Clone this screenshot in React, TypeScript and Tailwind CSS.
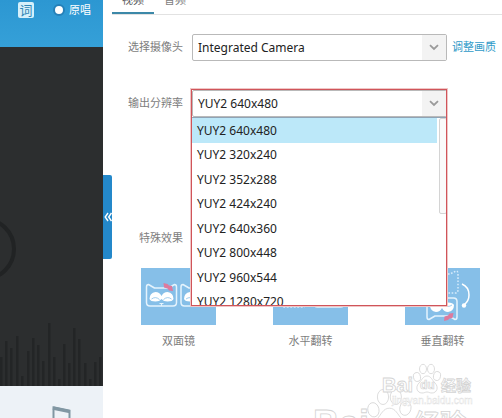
import { useState } from 'react';

const CAMERAS = ['Integrated Camera'];

const RESOLUTIONS = [
  'YUY2 640x480',
  'YUY2 320x240',
  'YUY2 352x288',
  'YUY2 424x240',
  'YUY2 640x360',
  'YUY2 800x448',
  'YUY2 960x544',
  'YUY2 1280x720',
];

// [x, height] of each spectrum bar
const BARS = [
  [0, 29], [5, 45], [10, 38], [16, 50], [21, 10], [27, 35], [32, 48], [37, 41], [42, 25], [48, 63],
  [53, 29], [58, 7], [63, 42], [68, 23], [73, 58], [78, 47], [84, 23], [89, 7], [94, 24], [99, 29],
];

const FIELD =
  'block h-[27px] w-full appearance-none rounded-xs border border-[#b9b9b9] bg-white px-[5px] text-xs text-[#222] outline-none';

function Chevron() {
  return (
    <span className="pointer-events-none absolute inset-y-px right-px flex w-6 items-center justify-center bg-[#f3f3f3]">
      <svg width="10" height="7" viewBox="0 0 10 7" fill="none" stroke="#9a9a9a" strokeWidth="1.8">
        <path d="M1 1.2l4 3.8 4-3.8" />
      </svg>
    </span>
  );
}

function CatFace() {
  return (
    <g>
      <path
        d="M3 2.500l6 3.500h14l6-3.500q2 0 2 2.500v15.500q0 3.500-3.500 3.500h-23Q1 24 1 20.500V5Q1 2.500 3 2.500z"
        fill="none"
        stroke="#e4f3fd"
        strokeWidth="1.500"
        strokeLinejoin="round"
      />
      <path d="M4 17q0-6 6-7 4 0 6 4 2-4 6-4 6 1 6 7-1 2.500-6 2.500-4 0-6-2.500-2 2.500-6 2.500-5 0-6-2.500z" fill="#fff" />
      <path d="M6 17q4-3 8 .5M18 17.500q4-3.500 8-.5" fill="none" stroke="#86bfe8" strokeWidth="0.800" />
      <path d="M14 21.500h4M16 21v3" stroke="#e4f3fd" strokeWidth="1.200" />
      <path d="M18 1l4 1 1.500 1.500 3 .5 1 5-4-.5-1.500-2-3.500-1z" fill="#dd7a9d" />
    </g>
  );
}

function MirrorArt() {
  return (
    <svg className="block h-[57px] w-[75px]" viewBox="0 0 75 57">
      <g transform="translate(4.500 14)"><CatFace /></g>
      <g transform="translate(39 14)"><CatFace /></g>
    </svg>
  );
}

function HorizontalArt() {
  return (
    <svg className="block h-[57px] w-[75px]" viewBox="0 0 75 57">
      <rect x="8" y="16" width="25" height="23" rx="3" fill="none" stroke="#d6ebfb" strokeWidth="1.300" strokeDasharray="2 1.500" />
      <g transform="translate(40 15)"><CatFace /></g>
      <path d="M24 11q13-9 26-1" fill="none" stroke="#fff" strokeWidth="1.500" />
    </svg>
  );
}

function VerticalArt() {
  return (
    <svg className="block h-[57px] w-[75px]" viewBox="0 0 75 57">
      <path d="M24 25V3l7 3h14l6-3q2 0 2 3v16q0 3-3 3z" fill="none" stroke="#d6ebfb" strokeWidth="1.500" strokeDasharray="1.600 1.600" />
      <g transform="translate(21 54) scale(1 -1)"><CatFace /></g>
      <path d="M57 16q7 3 7 11 0 6-5 10" fill="none" stroke="#fff" strokeWidth="1.500" />
      <circle cx="59" cy="37.500" r="2.200" fill="#fff" />
    </svg>
  );
}

function Paw() {
  return (
    <g fill="#fff">
      <ellipse cx="4" cy="13" rx="3.500" ry="4.500" transform="rotate(-12 4 13)" />
      <ellipse cx="10" cy="5" rx="3.500" ry="4.700" />
      <ellipse cx="18" cy="5" rx="3.500" ry="4.700" />
      <ellipse cx="24" cy="12" rx="3.500" ry="4.500" transform="rotate(12 24 12)" />
      <path d="M14 12c4 0 5 4 8 7 4 4 2 10-3 10-3 0-3-1-5-1s-2 1-5 1c-5 0-7-6-3-10 3-3 4-7 8-7z" />
    </g>
  );
}

function Watermark() {
  return (
    <svg
      className="pointer-events-none absolute right-0 bottom-0 h-[58px] w-[192px] font-['Liberation_Sans','Noto_Sans_CJK_SC',sans-serif] font-bold"
      viewBox="0 0 192 58"
      fill="#fff"
      stroke="#d4d4d4"
      strokeWidth="0.800"
    >
      <g transform="translate(57 29) scale(1.600)" strokeWidth="0.500"><Paw /></g>
      <text x="3" y="76" fontSize="36">Bai</text>
      <text x="104" y="73" fontSize="26">经验</text>
      <text x="72" y="32" fontSize="20">Bai</text>
      <g transform="translate(103 4)"><Paw /></g>
      <text x="110" y="29" fontSize="12" strokeWidth="0.700">du</text>
      <text x="131" y="31" fontSize="15">经验</text>
      <text x="82" y="44" fontSize="10" strokeWidth="0.400" stroke="#dedede" fontWeight="400">jingyan.baidu.com</text>
    </svg>
  );
}

const EFFECTS = [
  { label: '双面镜', Art: MirrorArt },
  { label: '水平翻转', Art: HorizontalArt },
  { label: '垂直翻转', Art: VerticalArt },
];

function PlayerPanel() {
  const [original, setOriginal] = useState(true);

  return (
    <aside className="relative flex w-[103px] shrink-0 flex-col">
      <header className="flex h-[47px] items-start bg-linear-to-b from-[#2c97d2] to-[#35a0d8] pt-0.5 pl-[18px] text-[11px] text-white">
        <button type="button" className="h-4 w-4 rounded-xs bg-[#d5f0fb] text-[13px] leading-4 text-[#2f86b5]">
          词
        </button>
        <label className="ml-[19px] flex h-4 items-center gap-1">
          <input
            type="radio"
            name="vocal"
            checked={original}
            onChange={() => setOriginal(true)}
            className="h-3 w-3 appearance-none rounded-full border-2 border-[#2580b8] bg-white"
          />
          原唱
        </label>
      </header>

      <div className="relative flex flex-1 items-end overflow-hidden bg-[#2c2e2f]">
        <svg className="absolute top-[168px] left-0" width="18" height="68" viewBox="0 0 18 68" fill="none">
          <circle cx="-16" cy="34" r="30" stroke="#212324" strokeWidth="4" />
        </svg>
        <svg className="block h-16 w-full" viewBox="0 0 103 64" preserveAspectRatio="none">
          {BARS.map(([x, h]) => (
            <rect key={x} x={x} y={64 - h} width="2.500" height={h} fill="#232526" />
          ))}
        </svg>
      </div>

      <footer className="flex h-8 justify-end bg-[#edf2f7] pt-5 pr-8">
        <svg width="19" height="12" viewBox="0 0 19 12" fill="none" stroke="#8197a3">
          <path d="M1.500 12V1.500L17.500 5V12" strokeWidth="2" />
          <path d="M1 2l17 3.500" strokeWidth="3.500" />
        </svg>
      </footer>

      <button
        type="button"
        aria-label="收起"
        className="absolute top-[175px] left-full flex h-21 w-[9px] items-center justify-center rounded-r-xs bg-[#2488ca]"
      >
        <svg width="8" height="10" viewBox="0 0 8 10" fill="none" stroke="#fff" strokeWidth="1.400">
          <path d="M4 1L1.200 5 4 9M7.500 1L4.700 5l2.800 4" />
        </svg>
      </button>
    </aside>
  );
}

function ResolutionPicker() {
  const [value, setValue] = useState(RESOLUTIONS[0]);

  return (
    <div className="relative">
      <select id="resolution" value={value} onChange={(e) => setValue(e.target.value)} className={FIELD}>
        {RESOLUTIONS.map((r) => (
          <option key={r}>{r}</option>
        ))}
      </select>
      <Chevron />

      {/* Open list */}
      <div className="absolute inset-x-0 top-full z-10 flex h-[188px] overflow-hidden border-t border-[#8fa3b5] bg-white">
        <ul role="listbox" aria-label="输出分辨率" className="flex-1">
          {RESOLUTIONS.map((r) => (
            <li
              key={r}
              role="option"
              aria-selected={r === value}
              onClick={() => setValue(r)}
              className={`flex items-center px-[5px] text-xs text-[#222] odd:h-[25px] even:h-6 ${
                r === value ? 'bg-[#bce8f9]' : 'bg-white'
              }`}
            >
              {r}
            </li>
          ))}
        </ul>
        <div className="ml-0.5 h-24 w-2 rounded-xs border border-[#d4d4d4] bg-[#fafafa]" />
      </div>

      {/* Highlight frame */}
      <div className="pointer-events-none absolute -top-px right-0 -left-px z-20 h-[217px] border border-[#d0545a] outline outline-[#f0c6c6]" />
    </div>
  );
}

export default function App() {
  const [tab, setTab] = useState('视频');

  return (
    <div className="relative flex h-screen overflow-hidden bg-white font-['Noto_Sans','Noto_Sans_CJK_SC',sans-serif] text-[11px] text-[#7d7d7d]">
      <PlayerPanel />

      <main className="min-w-0 flex-1">
        <nav className="ml-[9px] flex h-[15px] items-end overflow-hidden border-b border-[#e2e2e2]">
          {['视频', '音频'].map((t) => (
            <button
              key={t}
              type="button"
              onClick={() => setTab(t)}
              className={`border-b-2 px-[10px] pb-1 leading-4 ${
                t === tab ? 'border-[#3c88a8] text-[#555]' : 'border-transparent'
              }`}
            >
              {t}
            </button>
          ))}
        </nav>

        <div className="mt-[19px] grid grid-cols-[80px_1fr_46px] items-center gap-y-[29px] pr-1">
          <label htmlFor="camera" className="text-right">选择摄像头</label>
          <div className="relative mr-[5px] ml-[9px]">
            <select id="camera" className={FIELD}>
              {CAMERAS.map((c) => (
                <option key={c}>{c}</option>
              ))}
            </select>
            <Chevron />
          </div>
          <a href="#quality" className="whitespace-nowrap text-[#2f9ac8]">调整画质</a>

          <label htmlFor="resolution" className="text-right">输出分辨率</label>
          <div className="mr-[5px] ml-[9px]">
            <ResolutionPicker />
          </div>
        </div>

        <section className="mt-[113px]">
          <h2 className="w-20 text-right leading-4">特殊效果</h2>
          <div className="mt-[22px] ml-[38px] flex gap-[57px]">
            {EFFECTS.map(({ label, Art }) => (
              <button key={label} type="button" className="flex shrink-0 flex-col items-center">
                <span className="bg-[#86bfe8]"><Art /></span>
                <span className="mt-2 leading-4">{label}</span>
              </button>
            ))}
          </div>
        </section>
      </main>

      <Watermark />
    </div>
  );
}
